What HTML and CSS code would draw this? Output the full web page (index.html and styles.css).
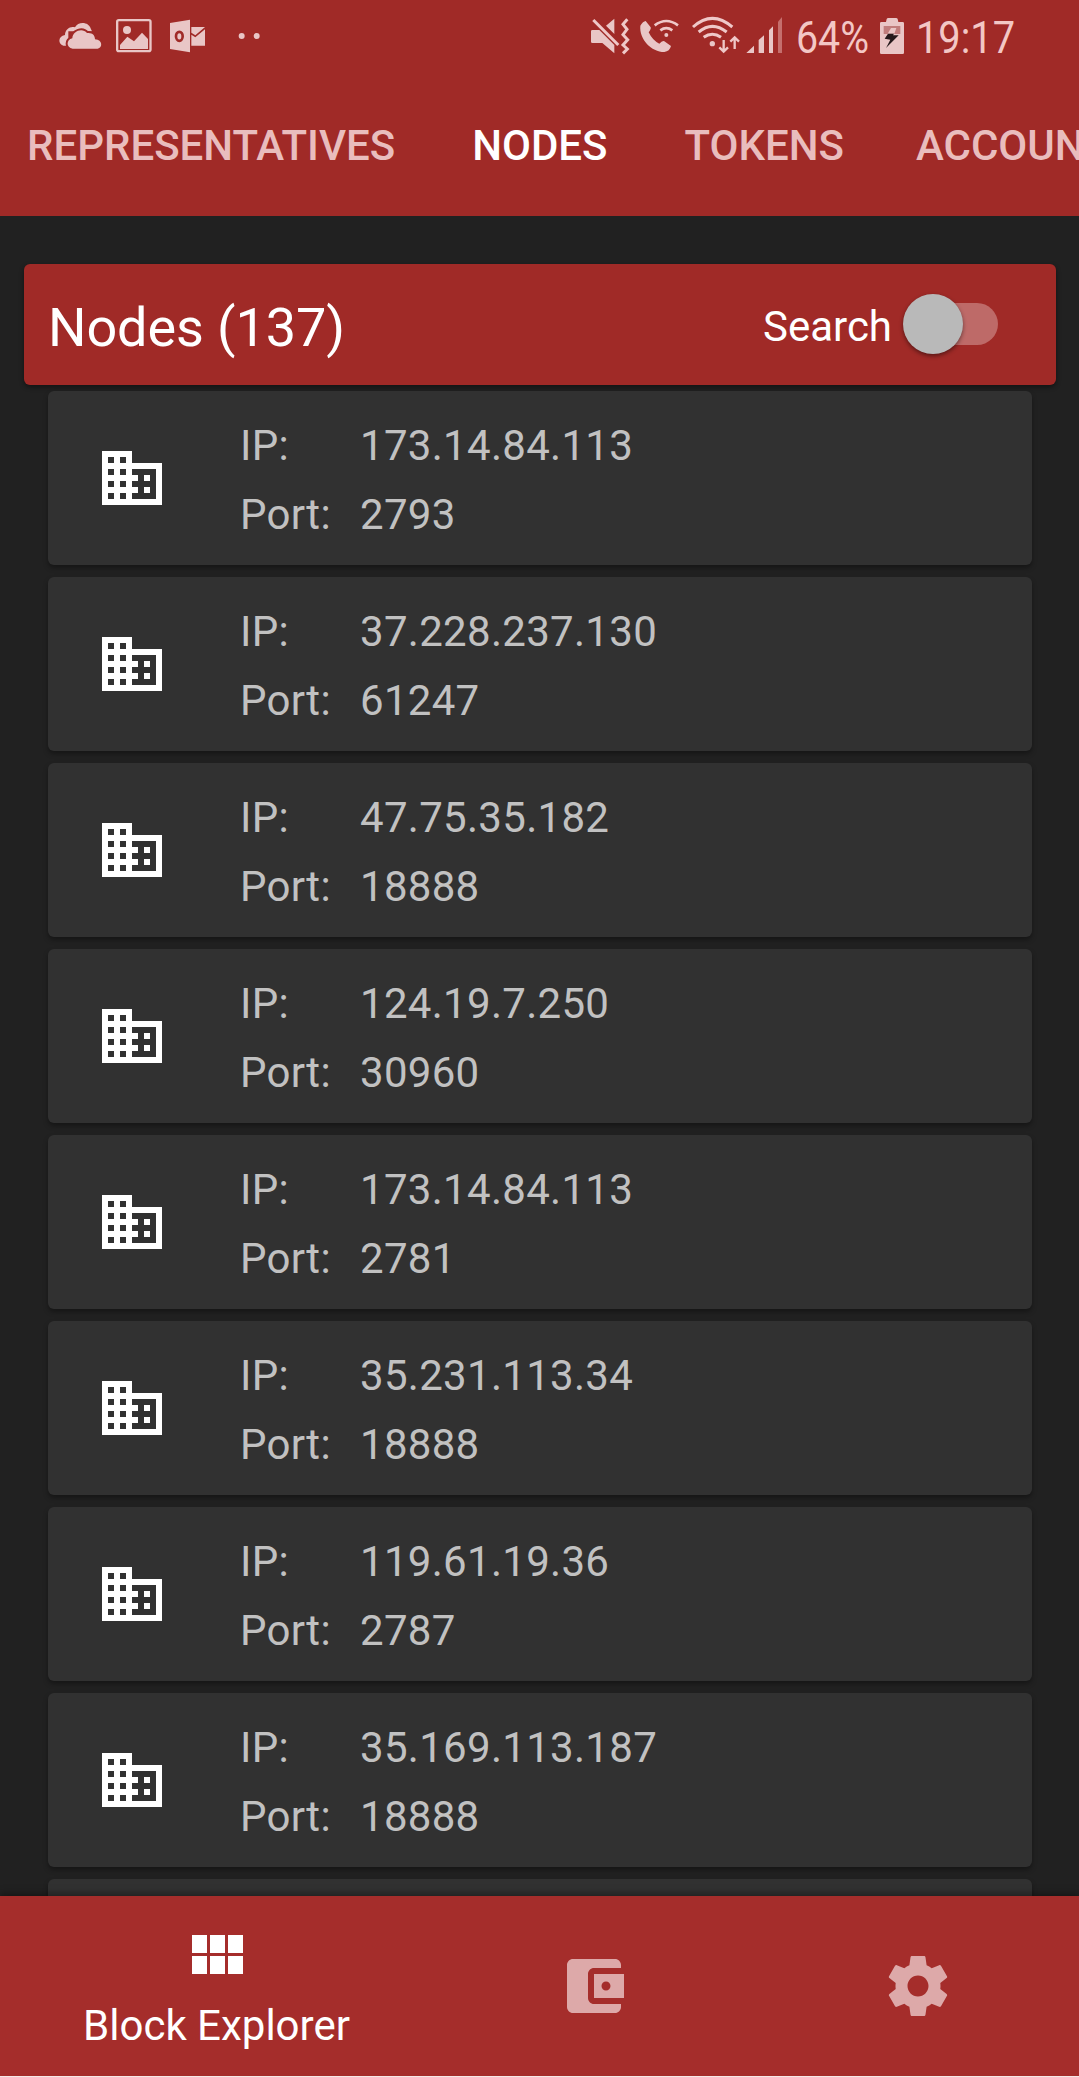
FILE: index.html
```html
<!DOCTYPE html>
<html lang="en">
<head>
<meta charset="utf-8">
<title>Block Explorer - Nodes</title>
<link rel="stylesheet" href="styles.css">
</head>
<body>
<svg class="defs" width="0" height="0">
  <symbol id="building" viewBox="0 0 24 24"><path d="M12 7V3H2v18h20V7H12zM6 19H4v-2h2v2zm0-4H4v-2h2v2zm0-4H4V9h2v2zm0-4H4V5h2v2zm4 12H8v-2h2v2zm0-4H8v-2h2v2zm0-4H8V9h2v2zm0-4H8V5h2v2zm10 12h-8v-2h2v-2h-2v-2h2v-2h-2V9h8v10zm-2-8h-2v2h2v-2zm0 4h-2v2h2v-2z"/></symbol>
</svg>
<div class="app">
  <header class="header">
    <div class="status">
      <div class="status-left">
        <svg class="cloud" width="44" height="75" viewBox="54 0 132 225">
          <path d="M70 137C54 133 53 108 75 105C75 87 92 77 105 82C114 64 147 64 153 88L156 94H85V137Z"/>
          <path class="cut" d="M98 146C78 144 78 119 97 115C98 92 128 83 141 99C157 97 165 106 165 118C189 119 188 145 173 146Z"/>
        </svg>
        <svg class="picture" width="36" height="75" viewBox="228 0 108 225">
          <rect class="line" x="231.500" y="60.500" width="100" height="93" rx="5"/>
          <circle cx="261" cy="90" r="12"/>
          <path d="M240 135L262 110L282 124L306 98L324 117V147H240Z"/>
        </svg>
        <svg class="mail" width="37" height="75" viewBox="387 0 111 225">
          <path d="M390 69L450 59V157L390 147Z"/>
          <path d="M454 81H495L466 106L454 98ZM454 104L466 112L495 88V137H454Z"/>
          <ellipse class="letter" cx="418" cy="109" rx="10" ry="13.500"/>
        </svg>
        <svg class="dots" width="23" height="75" viewBox="594 0 69 225"><circle cx="605" cy="108" r="9"/><circle cx="650" cy="108" r="9"/></svg>
      </div>
      <div class="status-right">
        <svg class="mute" width="40" height="75" viewBox="30 0 120 225">
          <path d="M33 94Q33 90 37 90H58L103 135V160L67 129H37Q33 129 33 125ZM78 77L103 56V102Z"/>
          <path class="stroke" d="M40 60L115 135"/>
          <path class="stroke" d="M142 58L129 73L141 88L129 104L143 119L129 135L142 147L129 160"/>
        </svg>
        <svg class="phone" width="41" height="75" viewBox="177 0 123 225">
          <path d="M181 77Q189 64 197 63L212 82Q214 87 206 97Q218 122 238 131Q247 121 253 124L273 138Q269 154 253 156C214 156 177 117 181 77Z"/>
          <circle cx="259" cy="105" r="6"/>
          <path class="stroke thin" d="M241 91Q259 78 277 91M224 76Q259 50 294 76"/>
        </svg>
        <svg class="wifi" width="50" height="75" viewBox="333 0 150 225">
          <circle cx="397" cy="131" r="8"/>
          <path class="stroke" d="M371 112Q397 93 423 112M356 96Q397 62 440 96M339 81Q397 29 457 81"/>
          <path class="stroke small" d="M431 120V153M418 142L431 155L444 142M464 147V114M451 125L464 112L477 125"/>
        </svg>
        <svg class="signal" width="37" height="75" viewBox="498 0 111 225">
          <path d="M499 159L522 137V159ZM536 159V120L552 106V159ZM567 159V91L579 79V159Z"/><path class="faint" d="M594 159V65L606 51V159Z"/>
        </svg>
        <svg class="percent" width="70" height="75" viewBox="0 0 70 75"><text x="-2" y="53" textLength="73" lengthAdjust="spacingAndGlyphs">64%</text></svg>
        <svg class="battery" width="26" height="75" viewBox="297 0 78 225">
          <path d="M300 70Q300 66 304 66H318L320 57Q321 54 325 54H348Q352 54 353 57L355 66H368Q372 66 372 70V158Q372 162 368 162H304Q300 162 300 158Z"/>
          <path class="drained" d="M311 78H361V102H311Z"/>
          <path d="M333 84H349L343 101H323Z"/>
          <path class="bolt" d="M324 101H342L339 106H356L318 144L331 119L314 116Z"/>
        </svg>
        <svg class="clock" width="97" height="75" viewBox="0 0 97 75"><text x="-3" y="53" textLength="99" lengthAdjust="spacingAndGlyphs">19:17</text></svg>
      </div>
    </div>
    <nav class="tabs">
      <a class="tab">REPRESENTATIVES</a>
      <a class="tab active">NODES</a>
      <a class="tab">TOKENS</a>
      <a class="tab">ACCOUN</a>
    </nav>
  </header>
  <main class="content">
    <section class="title-card">
      <h1 class="title">Nodes (137)</h1>
      <span class="search-label">Search</span>
      <span class="switch"><span class="thumb"></span></span>
    </section>
    <div class="list">
      <article class="node"><svg class="node-icon"><use href="#building"/></svg><dl class="info"><dt>IP:</dt><dd>173.14.84.113</dd><dt>Port:</dt><dd>2793</dd></dl></article>
      <article class="node"><svg class="node-icon"><use href="#building"/></svg><dl class="info"><dt>IP:</dt><dd>37.228.237.130</dd><dt>Port:</dt><dd>61247</dd></dl></article>
      <article class="node"><svg class="node-icon"><use href="#building"/></svg><dl class="info"><dt>IP:</dt><dd>47.75.35.182</dd><dt>Port:</dt><dd>18888</dd></dl></article>
      <article class="node"><svg class="node-icon"><use href="#building"/></svg><dl class="info"><dt>IP:</dt><dd>124.19.7.250</dd><dt>Port:</dt><dd>30960</dd></dl></article>
      <article class="node"><svg class="node-icon"><use href="#building"/></svg><dl class="info"><dt>IP:</dt><dd>173.14.84.113</dd><dt>Port:</dt><dd>2781</dd></dl></article>
      <article class="node"><svg class="node-icon"><use href="#building"/></svg><dl class="info"><dt>IP:</dt><dd>35.231.113.34</dd><dt>Port:</dt><dd>18888</dd></dl></article>
      <article class="node"><svg class="node-icon"><use href="#building"/></svg><dl class="info"><dt>IP:</dt><dd>119.61.19.36</dd><dt>Port:</dt><dd>2787</dd></dl></article>
      <article class="node"><svg class="node-icon"><use href="#building"/></svg><dl class="info"><dt>IP:</dt><dd>35.169.113.187</dd><dt>Port:</dt><dd>18888</dd></dl></article>
      <article class="node"></article>
    </div>
  </main>
  <nav class="bottom">
    <a class="item selected">
      <svg viewBox="0 0 24 24"><path d="M4 11h5V5H4v6zm0 7h5v-6H4v6zm6 0h5v-6h-5v6zm6 0h5v-6h-5v6zm-6-7h5V5h-5v6zm6-6v6h5V5h-5z"/></svg>
      <span>Block Explorer</span>
    </a>
    <a class="item wallet">
      <svg viewBox="0 0 24 24"><path d="M21 18v1c0 1.100-.9 2-2 2H5c-1.110 0-2-.9-2-2V5c0-1.100.89-2 2-2h14c1.100 0 2 .9 2 2v1h-9c-1.110 0-2 .9-2 2v8c0 1.100.89 2 2 2h9zm-9-2h10V8H12v8zm4-2.500c-.83 0-1.500-.67-1.500-1.500s.67-1.500 1.500-1.500 1.500.67 1.500 1.500-.67 1.500-1.500 1.500z"/></svg>
    </a>
    <a class="item settings">
      <svg viewBox="0 0 24 24"><path d="M19.430 12.980c.04-.32.07-.64.07-.98s-.03-.66-.07-.98l2.110-1.650c.19-.15.24-.42.12-.64l-2-3.460c-.12-.22-.39-.3-.61-.22l-2.490 1c-.52-.4-1.080-.73-1.690-.98l-.38-2.650C14.460 2.180 14.250 2 14 2h-4c-.25 0-.46.18-.49.42l-.38 2.650c-.61.25-1.170.59-1.690.98l-2.490-1c-.23-.09-.49 0-.61.22l-2 3.460c-.13.22-.07.49.12.64l2.110 1.650c-.04.32-.07.65-.07.98s.03.66.07.98l-2.110 1.650c-.19.15-.24.42-.12.64l2 3.460c.12.22.39.3.61.22l2.490-1c.52.4 1.080.73 1.690.98l.38 2.650c.03.24.24.42.49.42h4c.25 0 .46-.18.49-.42l.38-2.650c.61-.25 1.170-.59 1.690-.98l2.490 1c.23.09.49 0 .61-.22l2-3.460c.12-.22.07-.49-.12-.64l-2.110-1.650zM12 15.500c-1.930 0-3.500-1.570-3.500-3.500s1.570-3.500 3.500-3.500 3.500 1.570 3.500 3.500-1.570 3.500-3.500 3.500z"/></svg>
    </a>
  </nav>
</div>
</body>
</html>
```

FILE: styles.css
```css
* { box-sizing: border-box; }
body { margin: 0; background: #212121; font-family: Roboto, "Liberation Sans", sans-serif; font-size: 42px; }
.defs { display: block; }
.app { display: flex; flex-direction: column; height: 2077px; overflow: hidden; }

.header { flex: none; height: 216px; background: #a02a27; overflow: hidden; }
.status { display: flex; justify-content: space-between; height: 75px; padding: 0 63px 0 58px; fill: #e9c6c6; }
.status-left, .status-right { display: flex; }
.status svg { display: block; overflow: visible; flex: none; }
.status text { font-size: 45px; fill: #f3c7c5; }
.picture { margin-left: 14px; }
.mail { margin-left: 17px; }
.dots { margin-left: 32px; }
.phone { margin-left: 9px; }
.wifi { margin-left: 11px; }
.signal { margin-left: 5px; }
.percent { margin-left: 15px; }
.battery { margin-left: 11px; }
.clock { margin-left: 14px; }
.cut { stroke: #a02a27; stroke-width: 12px; paint-order: stroke; }
.line { fill: none; stroke: #e9c6c6; stroke-width: 7px; }
.letter { fill: none; stroke: #a02a27; stroke-width: 8px; }
.stroke { fill: none; stroke: #efc8c8; stroke-width: 9px; }
.thin { stroke-width: 8px; }
.small { stroke-width: 7px; }
.faint { fill: #c56f6d; }
.drained { fill: #c07d7c; }
.bolt { fill: #25191b; }

.tabs { display: flex; height: 141px; padding: 46px 0 0 27px; line-height: 50px; font-weight: 500; color: #e9bdbd; white-space: nowrap; }
.tab { flex: none; margin-right: 77px; }
.tab.active { color: #fff; }
.tab:nth-child(3) { margin-right: 72px; }

.content { flex: 1; min-height: 0; overflow: hidden; padding: 48px 23px 0 24px; }
.title-card { display: flex; align-items: center; height: 121px; padding: 0 58px 0 24px; border-radius: 6px; background: #a02a27; color: #fff; box-shadow: 0 2px 5px rgba(0,0,0,.45); }
.title { flex: 1; margin: 6px 0 0; font-size: 54px; font-weight: 400; line-height: 64px; letter-spacing: -.1px; }
.search-label { margin: 4px 20px 0 0; line-height: 50px; }
.switch { display: flex; align-items: center; width: 86px; height: 42px; margin-bottom: 1px; border-radius: 21px; background: #be6a68; }
.thumb { width: 60px; height: 60px; margin-left: -9px; border-radius: 50%; background: #b9b9b9; box-shadow: 0 2px 4px rgba(0,0,0,.45); }

.list { display: flex; flex-direction: column; gap: 12px; padding: 6px 24px 0; }
.node { display: flex; align-items: center; flex: none; height: 174px; padding-left: 48px; border-radius: 6px; background: #313131; box-shadow: 0 3px 5px rgba(0,0,0,.35); }
.node-icon { width: 72px; height: 72px; fill: #fff; }
.info { display: grid; grid-template-columns: 120px auto; grid-auto-rows: 69px; margin: 4px 0 0 72px; line-height: 69px; color: #c1c1c1; letter-spacing: .3px; }
.info dd { margin: 0; }

.bottom { position: relative; display: flex; flex: none; height: 181px; border-bottom: 1px solid #f5e8e6; background: #a52d2b; box-shadow: 0 -2px 8px rgba(0,0,0,.4); }
.item { display: flex; flex: none; flex-direction: column; align-items: center; justify-content: center; fill: #dda9a9; }
.item svg { display: block; width: 72px; height: 72px; }
.selected { width: 432px; justify-content: flex-start; padding-top: 24px; fill: #fff; color: #fff; line-height: 50px; }
.selected span { margin: 9px 0 0 1px; }
.wallet { width: 324px; }
.settings { width: 324px; }
```
